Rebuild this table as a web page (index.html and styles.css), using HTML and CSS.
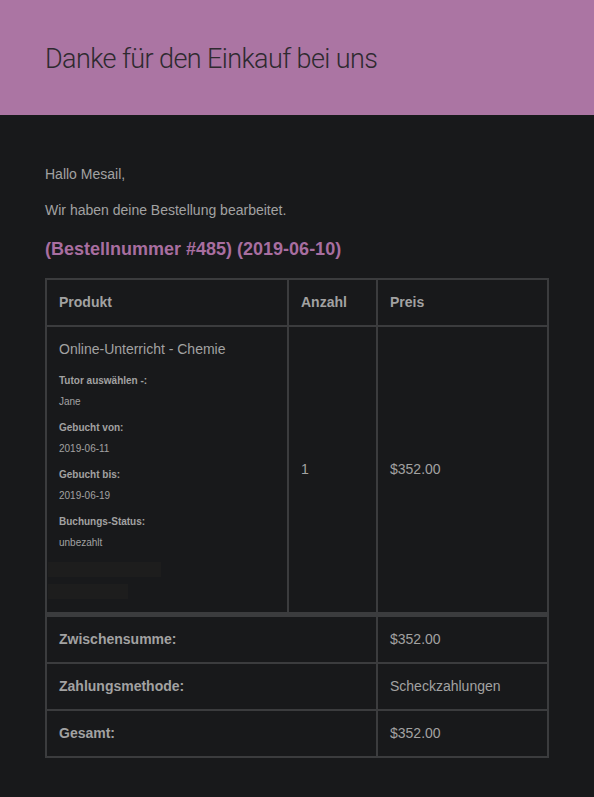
FILE: index.html
```html
<!DOCTYPE html>
<html lang="de">
<head>
<meta charset="utf-8">
<title>Bestellung</title>
<link rel="stylesheet" href="styles.css">
</head>
<body>
<header class="hero">
  <h1 class="hero-title">Danke für den Einkauf bei uns</h1>
</header>
<main class="content">
  <p class="para">Hallo Mesail,</p>
  <p class="para">Wir haben deine Bestellung bearbeitet.</p>
  <h2 class="order-title">(Bestellnummer #485) (2019-06-10)</h2>
  <table class="order">
    <thead>
      <tr>
        <th class="cell col-product">Produkt</th>
        <th class="cell col-qty">Anzahl</th>
        <th class="cell col-price">Preis</th>
      </tr>
    </thead>
    <tbody>
      <tr>
        <td class="cell product-cell">
          <div class="product-name">Online-Unterricht - Chemie</div>
          <ul class="meta">
            <li class="meta-item"><strong class="meta-label">Tutor auswählen -:</strong><p class="meta-value">Jane</p></li>
            <li class="meta-item"><strong class="meta-label">Gebucht von:</strong><p class="meta-value">2019-06-11</p></li>
            <li class="meta-item"><strong class="meta-label">Gebucht bis:</strong><p class="meta-value">2019-06-19</p></li>
            <li class="meta-item"><strong class="meta-label">Buchungs-Status:</strong><p class="meta-value">unbezahlt</p></li>
          </ul>
          <div class="ghost ghost-a"></div>
          <div class="ghost ghost-b"></div>
        </td>
        <td class="cell mid">1</td>
        <td class="cell mid">$352.00</td>
      </tr>
    </tbody>
    <tfoot>
      <tr class="first-foot">
        <th class="cell foot-label" colspan="2">Zwischensumme:</th>
        <td class="cell">$352.00</td>
      </tr>
      <tr>
        <th class="cell foot-label" colspan="2">Zahlungsmethode:</th>
        <td class="cell">Scheckzahlungen</td>
      </tr>
      <tr>
        <th class="cell foot-label" colspan="2">Gesamt:</th>
        <td class="cell">$352.00</td>
      </tr>
    </tfoot>
  </table>
</main>
</body>
</html>
```

FILE: styles.css
```css
html, body {
  margin: 0;
  padding: 0;
  background: #18191b;
}
body {
  font-family: "Liberation Sans", Arial, sans-serif;
  color: #a2a2a2;
  font-size: 14px;
}
.hero {
  background: #ab75a3;
  height: 115px;
  padding: 0 45px;
  box-sizing: border-box;
  display: flex;
  align-items: center;
}
.hero-title {
  margin: 2px 0 0;
  font-family: "Roboto", "Liberation Sans", sans-serif;
  font-size: 27px;
  font-weight: 300;
  letter-spacing: -0.6px;
  color: #2e2a2f;
  line-height: 36px;
}
.content {
  padding: 49px 45px 40px;
}
.para {
  margin: 0 0 15px;
  line-height: 21px;
}
.order-title {
  margin: 17px 0 17px;
  font-size: 18px;
  line-height: 23px;
  font-weight: bold;
  color: #a86ea0;
}
.order {
  width: 504px;
  table-layout: fixed;
  border-collapse: separate;
  border-spacing: 0;
  border: 1px solid #3b3c3e;
}
.cell {
  box-sizing: border-box;
  border: 1px solid #3b3c3e;
  padding: 12px;
  text-align: left;
  vertical-align: middle;
  line-height: 21px;
  color: #a2a2a2;
}
th.cell {
  font-weight: bold;
}
.col-product { width: 242px; }
.col-qty { width: 89px; }
.product-cell {
  vertical-align: top;
  padding-bottom: 13px;
}
.product-name {
  line-height: 20px;
  margin-bottom: 15px;
}
.meta {
  list-style: none;
  margin: 0;
  padding: 0;
  font-size: 10px;
}
.meta-item {
  margin: 0 0 12px;
}
.meta-label {
  display: block;
  line-height: 14px;
}
.meta-value {
  margin: 7px 0 0;
  line-height: 14px;
}
.ghost {
  margin-left: -11px;
  background: #1d1d1d;
}
.ghost-a {
  width: 113px;
  height: 15px;
  margin-top: 0;
}
.ghost-b {
  width: 80px;
  height: 15px;
  margin-top: 7px;
}
.first-foot .cell {
  border-top-width: 4px;
}
```
